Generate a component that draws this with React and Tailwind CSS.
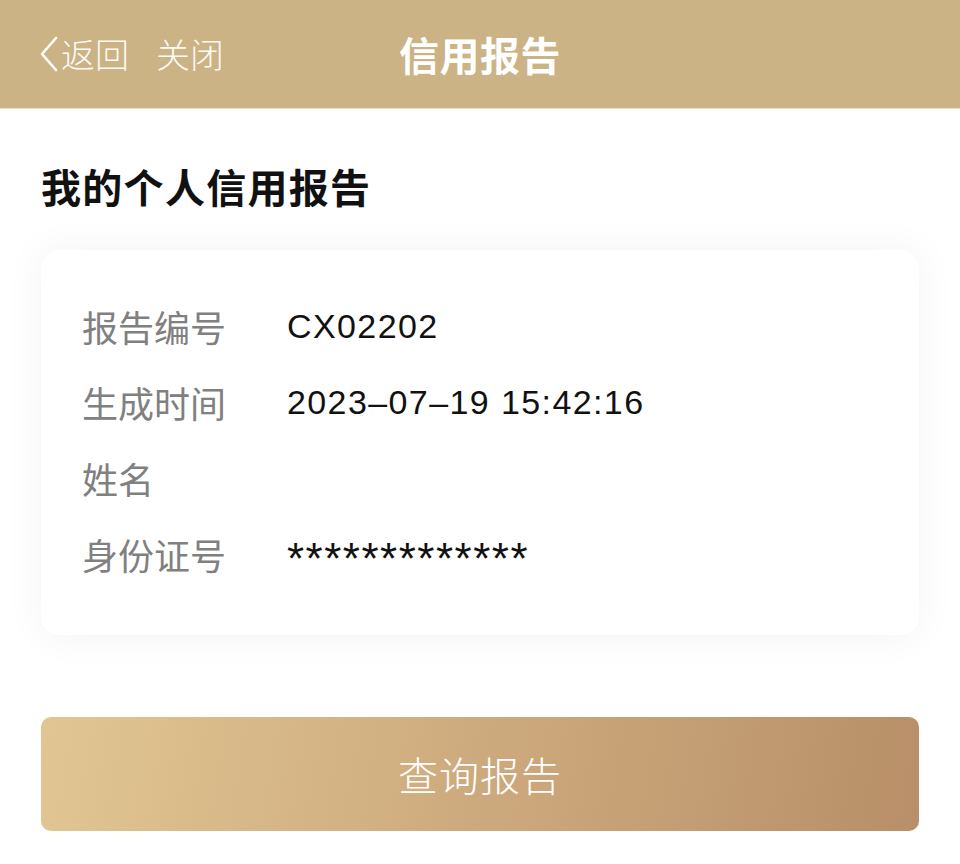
import React from 'react';

const cjk = "font-['PingFang_SC','Noto_Sans_CJK_SC',sans-serif]";
const latin = "font-['Liberation_Sans','Noto_Sans_CJK_SC',sans-serif]";

const rows = [
  { label: '报告编号', value: 'CX02202' },
  { label: '生成时间', value: '2023–07–19 15:42:16' },
  { label: '姓名', value: '' },
  { label: '身份证号', value: '*************', masked: true },
];

const App = () => {
  return (
    <div className={`${cjk} bg-white min-h-[864px] w-[960px] overflow-hidden`}>
      <header className="relative h-[109px] bg-[#cbb385] border-b border-[#e2ddd3] flex items-center justify-center">
        <div className="absolute left-[38px] top-0 h-full flex items-center text-white/95">
          <svg width="22" height="36" viewBox="0 0 22 36" className="mr-[1px]">
            <path d="M18 2 L4 18 L18 34" fill="none" stroke="white" strokeWidth="2.6" strokeLinecap="round" strokeLinejoin="round" />
          </svg>
          <span className="text-[34px] font-light leading-none">返回</span>
          <span className="text-[34px] font-light leading-none ml-[27px]">关闭</span>
        </div>
        <h1 className="text-[40px] font-semibold text-white leading-none tracking-[0.5px]">信用报告</h1>
      </header>

      <main className="px-[41px]">
        <h2 className="mt-[57px] text-[40px] font-bold text-[#111] leading-none tracking-[1.3px]">我的个人信用报告</h2>

        <section className="mt-[44px] h-[385px] rounded-[18px] bg-white shadow-[0_0_40px_rgba(0,0,0,0.05)] px-[41px] pt-[58px] flex flex-col gap-[40px]">
          {rows.map((r) => (
            <div key={r.label} className="flex items-center h-[36px]">
              <span className="w-[205px] text-[36px] text-[#808080] leading-none">{r.label}</span>
              {r.masked ? (
                <span className={`${latin} text-[44px] text-[#111] leading-none tracking-[1.5px] translate-y-[5px]`}>{r.value}</span>
              ) : (
                <span className={`${latin} text-[34px] text-[#111] leading-none tracking-[1.4px]`}>{r.value}</span>
              )}
            </div>
          ))}
        </section>

        <button className="mt-[82px] w-full h-[114px] rounded-[10px] bg-linear-100 from-[#e1c693] via-[#cdaa7d] to-[#b88f68] flex items-center justify-center text-white text-[40px] font-light tracking-[1px]">
          查询报告
        </button>
      </main>
    </div>
  );
};

export default App;
